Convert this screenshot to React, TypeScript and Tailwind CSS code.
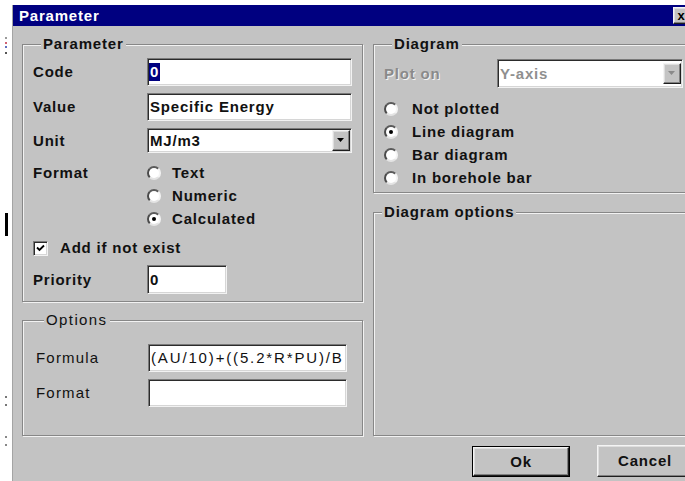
import React from 'react';

const FONT = "font-['Liberation_Sans',Arial,sans-serif]";
const FACE = 'bg-[#c3c3c3]';
const BOLD = 'font-bold tracking-[0.8px]';

// classic 3d edges
const sunken =
  'border border-t-[#7a7a7a] border-l-[#7a7a7a] border-r-[#f2f2f2] border-b-[#f2f2f2] shadow-[inset_1px_1px_0_#2b2b2b,inset_-1px_-1px_0_#d6d6d6] bg-white';
const raised =
  'border border-t-[#f4f4f4] border-l-[#f4f4f4] border-r-[#1e1e1e] border-b-[#1e1e1e] shadow-[inset_-1px_-1px_0_#808080,inset_1px_1px_0_#dedede]';

interface GroupBoxProps {
  title: string;
  light?: boolean;
  className?: string;
  children?: React.ReactNode;
}

const GroupBox: React.FC<GroupBoxProps> = ({ title, light, className = '', children }) => (
  <div
    className={`flex flex-col border border-[#878787] shadow-[inset_1px_1px_0_#f2f2f2,1px_1px_0_#f2f2f2] ${className}`}
  >
    <span
      className={`-mt-[10px] ml-[8px] self-start px-[2px] leading-[18px] ${FACE} ${
        light ? 'font-normal tracking-[1.4px]' : BOLD
      }`}
    >
      {title}
    </span>
    {children}
  </div>
);

const DropArrow: React.FC<{ disabled?: boolean }> = ({ disabled }) => (
  <div className={`ml-auto mr-[1px] flex h-[21px] w-[18px] shrink-0 items-center justify-center ${FACE} ${raised}`}>
    <svg width="8" height="5" viewBox="0 0 8 5">
      <path d="M0 0h7L3.5 4z" fill={disabled ? '#8a8a8a' : '#000'} />
    </svg>
  </div>
);

const Radio: React.FC<{ label: string; checked?: boolean; gap: string }> = ({ label, checked, gap }) => (
  <div className={`flex h-[23px] items-center ${gap}`}>
    <div className="flex h-[14px] w-[14px] shrink-0 items-center justify-center rounded-full border-2 border-t-[#5a5a5a] border-l-[#4a4a4a] border-r-[#f4f4f4] border-b-[#e4e4e4] bg-white">
      {checked && <div className="h-[4px] w-[4px] rounded-full bg-black" />}
    </div>
    <span className={BOLD}>{label}</span>
  </div>
);

export default function App() {
  return (
    <div className={`flex h-[481px] w-[685px] overflow-hidden bg-white text-[15px] leading-[18px] text-[#111] ${FONT}`}>
      {/* screen edge left of the dialog */}
      <div className="flex w-[12px] shrink-0 flex-col items-center">
        <div className="mt-[37px] h-[2px] w-[2px] bg-[#9a9a9a]" />
        <div className="mt-[3px] h-[2px] w-[2px] bg-[#d06070]" />
        <div className="mt-[2px] h-[2px] w-[2px] bg-[#6070c0]" />
        <div className="mt-[4px] h-[2px] w-[2px] bg-[#555]" />
        <div className="mt-[159px] h-[23px] w-[3px] bg-black" />
        <div className="mt-[160px] h-[2px] w-[2px] bg-[#777]" />
        <div className="mt-[6px] h-[2px] w-[2px] bg-[#777]" />
        <div className="mt-[30px] h-[2px] w-[2px] bg-[#888]" />
        <div className="mt-[6px] h-[2px] w-[2px] bg-[#888]" />
      </div>

      <div className={`mt-[5px] flex w-[691px] shrink-0 flex-col border-l border-[#a4a4a4] ${FACE}`}>
        {/* caption */}
        <div className="flex h-[21px] items-center bg-[#000080] pl-[6px] text-white">
          <span className={BOLD}>Parameter</span>
          <div className={`ml-auto mr-[14px] flex h-[17px] w-[16px] items-center justify-center text-[13px] font-bold text-black ${FACE} ${raised}`}>
            x
          </div>
        </div>

        <div className="flex pl-[9px] pr-[8px] pt-[18px]">
          {/* left column */}
          <div className="flex w-[341px] shrink-0 flex-col">
            <GroupBox title="Parameter" className="pb-[7px] pl-[10px] pr-[9px]">
              <div className="mt-[5px] flex h-[28px] items-center">
                <span className={`w-[114px] shrink-0 ${BOLD}`}>Code</span>
                <div className={`flex h-full w-[205px] items-center pl-[1px] ${sunken}`}>
                  <span className={`bg-[#000080] px-[1px] text-white ${BOLD}`}>0</span>
                </div>
              </div>
              <div className="mt-[7px] flex h-[28px] items-center">
                <span className={`w-[114px] shrink-0 ${BOLD}`}>Value</span>
                <div className={`flex h-full w-[205px] items-center pl-[2px] ${sunken}`}>
                  <span className={BOLD}>Specific Energy</span>
                </div>
              </div>
              <div className="mt-[7px] flex h-[25px] items-center">
                <span className={`w-[114px] shrink-0 ${BOLD}`}>Unit</span>
                <div className={`flex h-full w-[205px] items-center pl-[2px] ${sunken}`}>
                  <span className={BOLD}>MJ/m3</span>
                  <DropArrow />
                </div>
              </div>
              <div className="mt-[8px] flex">
                <span className={`flex h-[23px] w-[114px] shrink-0 items-center ${BOLD}`}>Format</span>
                <div className="flex flex-col">
                  <Radio label="Text" gap="gap-[11px]" />
                  <Radio label="Numeric" gap="gap-[11px]" />
                  <Radio label="Calculated" checked gap="gap-[11px]" />
                </div>
              </div>
              <div className="mt-[8px] flex h-[20px] items-center gap-[12px]">
                <div className={`flex h-[15px] w-[15px] items-center justify-center ${sunken}`}>
                  <svg width="9" height="8" viewBox="0 0 9 8">
                    <path d="M1 3.5l2.5 2.5L8 1.5" fill="none" stroke="#000" strokeWidth="1.8" />
                  </svg>
                </div>
                <span className={BOLD}>Add if not exist</span>
              </div>
              <div className="mt-[7px] flex h-[29px] items-center">
                <span className={`w-[114px] shrink-0 ${BOLD}`}>Priority</span>
                <div className={`flex h-full w-[80px] items-center pl-[2px] ${sunken}`}>
                  <span className={BOLD}>0</span>
                </div>
              </div>
            </GroupBox>

            <GroupBox title="Options" light className="mt-[18px] pb-[28px] pl-[13px]">
              <div className="mt-[15px] flex h-[28px] items-center">
                <span className="w-[112px] shrink-0 tracking-[1.2px]">Formula</span>
                <div className={`flex h-full w-[199px] items-center overflow-hidden whitespace-nowrap pl-[2px] ${sunken}`}>
                  <span className="tracking-[1.85px]">(AU/10)+((5.2*R*PU)/B</span>
                </div>
              </div>
              <div className="mt-[7px] flex h-[28px] items-center">
                <span className="w-[112px] shrink-0 tracking-[1.2px]">Format</span>
                <div className={`h-full w-[199px] ${sunken}`} />
              </div>
            </GroupBox>
          </div>

          {/* right column */}
          <div className="ml-[10px] flex flex-1 flex-col">
            <GroupBox title="Diagram" className="pb-[3px] pl-[10px]">
              <div className="mt-[6px] flex h-[29px] items-center">
                <span className={`w-[113px] shrink-0 text-[#8a8a8a] [text-shadow:1px_1px_0_#f4f4f4] ${BOLD}`}>Plot on</span>
                <div className={`flex h-full w-[186px] items-center pl-[2px] ${sunken}`}>
                  <span className={`text-[#8f8f8f] ${BOLD}`}>Y-axis</span>
                  <DropArrow disabled />
                </div>
              </div>
              <div className="mt-[9px] flex flex-col">
                <Radio label="Not plotted" gap="gap-[14px]" />
                <Radio label="Line diagram" checked gap="gap-[14px]" />
                <Radio label="Bar diagram" gap="gap-[14px]" />
                <Radio label="In borehole bar" gap="gap-[14px]" />
              </div>
            </GroupBox>
            <GroupBox title="Diagram options" className="mt-[19px] flex-1" />
          </div>
        </div>

        {/* dialog buttons */}
        <div className="mt-[10px] flex justify-end gap-[27px] pr-[10px]">
          <div className="border border-black">
            <button className={`flex h-[29px] w-[96px] items-center justify-center ${FACE} ${raised} ${BOLD}`}>
              Ok
            </button>
          </div>
          <button className={`-mt-[1px] flex h-[32px] w-[96px] items-center justify-center ${FACE} ${raised} ${BOLD}`}>
            Cancel
          </button>
        </div>
      </div>
    </div>
  );
}
